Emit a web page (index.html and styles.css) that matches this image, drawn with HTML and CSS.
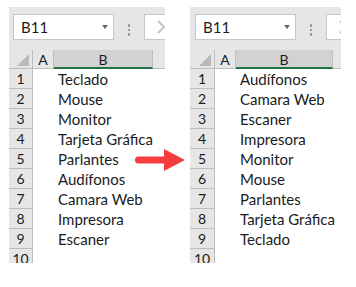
FILE: index.html
```html
<!DOCTYPE html>
<html>
<head>
<meta charset="utf-8">
<link rel="stylesheet" href="styles.css">
</head>
<body>
<div class="stage">
  <div class="sheet sheet-left">
    <div class="bar">
      <div class="namebox"><span class="ref">B11</span><span class="caret"></span></div>
      <div class="dots"><i></i><i></i><i></i></div>
      <div class="fx"><svg class="chev" width="8" height="14" viewBox="0 0 8 14"><polyline points="1,1 7,7 1,13" fill="none" stroke="#c4c4c4" stroke-width="2"/></svg></div>
    </div>
    <div class="grid">
      <div class="corner"></div><div class="ch">A</div><div class="ch sel">B</div><div class="ch rest"></div>
      <div class="rh">1</div><div class="c"></div><div class="c">Teclado</div><div class="c"></div>
      <div class="rh">2</div><div class="c"></div><div class="c">Mouse</div><div class="c"></div>
      <div class="rh">3</div><div class="c"></div><div class="c">Monitor</div><div class="c"></div>
      <div class="rh">4</div><div class="c"></div><div class="c">Tarjeta Gráfica</div><div class="c"></div>
      <div class="rh">5</div><div class="c"></div><div class="c">Parlantes</div><div class="c"></div>
      <div class="rh">6</div><div class="c"></div><div class="c">Audífonos</div><div class="c"></div>
      <div class="rh">7</div><div class="c"></div><div class="c">Camara Web</div><div class="c"></div>
      <div class="rh">8</div><div class="c"></div><div class="c">Impresora</div><div class="c"></div>
      <div class="rh">9</div><div class="c"></div><div class="c">Escaner</div><div class="c"></div>
      <div class="rh">10</div><div class="c"></div><div class="c"></div><div class="c"></div>
    </div>
  </div>

  <svg class="arrow" width="52" height="24" viewBox="0 0 52 24"><line x1="3.5" y1="11" x2="32" y2="11" stroke="#f53d3d" stroke-width="7" stroke-linecap="round"/><polygon points="29,0 50,11 29,22" fill="#f53d3d"/></svg>

  <div class="sheet sheet-right">
    <div class="bar">
      <div class="namebox"><span class="ref">B11</span><span class="caret"></span></div>
      <div class="dots"><i></i><i></i><i></i></div>
      <div class="fx"><svg class="chev" width="8" height="14" viewBox="0 0 8 14"><polyline points="1,1 7,7 1,13" fill="none" stroke="#c4c4c4" stroke-width="2"/></svg></div>
    </div>
    <div class="grid">
      <div class="corner"></div><div class="ch">A</div><div class="ch sel">B</div><div class="ch rest"></div>
      <div class="rh">1</div><div class="c"></div><div class="c">Audífonos</div><div class="c"></div>
      <div class="rh">2</div><div class="c"></div><div class="c">Camara Web</div><div class="c"></div>
      <div class="rh">3</div><div class="c"></div><div class="c">Escaner</div><div class="c"></div>
      <div class="rh">4</div><div class="c"></div><div class="c">Impresora</div><div class="c"></div>
      <div class="rh">5</div><div class="c"></div><div class="c">Monitor</div><div class="c"></div>
      <div class="rh">6</div><div class="c"></div><div class="c">Mouse</div><div class="c"></div>
      <div class="rh">7</div><div class="c"></div><div class="c">Parlantes</div><div class="c"></div>
      <div class="rh">8</div><div class="c"></div><div class="c">Tarjeta Gráfica</div><div class="c"></div>
      <div class="rh">9</div><div class="c"></div><div class="c">Teclado</div><div class="c"></div>
      <div class="rh">10</div><div class="c"></div><div class="c"></div><div class="c"></div>
    </div>
  </div>
</div>
</body>
</html>
```
FILE: styles.css
```css
html, body {
  margin: 0;
  padding: 0;
  background: #ffffff;
}
.stage {
  position: relative;
  display: flex;
  align-items: flex-start;
  padding: 7px 0 0 9px;
  gap: 25px;
  font-family: "Lato", "Liberation Sans", sans-serif;
  color: #1b1b1b;
}
.sheet {
  height: 256px;
  overflow: hidden;
  background: #e6e6e6;
  display: flex;
  flex-direction: column;
}
.sheet-left { width: 156px; --rh: 24px; --a: 21px; --b: 99px; --nbpad: 4px; }
.sheet-right { width: 151px; --rh: 25px; --a: 21px; --b: 97px; --nbpad: 5px; }

.bar {
  height: 43px;
  flex: none;
  box-sizing: border-box;
  padding: 7px 0 0 var(--nbpad);
  display: flex;
  align-items: flex-start;
}
.namebox {
  flex: none;
  width: 101px;
  height: 26px;
  box-sizing: border-box;
  background: #fff;
  border: 1px solid #c6c6c6;
  display: flex;
  align-items: center;
  justify-content: space-between;
  padding: 0 5px 0 7px;
  font-size: 15px;
}
.caret {
  width: 0;
  height: 0;
  border-left: 3.5px solid transparent;
  border-right: 3.5px solid transparent;
  border-top: 4px solid #6a6a6a;
}
.dots {
  flex: none;
  margin: 10px 0 0 14px;
  display: flex;
  flex-direction: column;
  gap: 2px;
}
.dots i {
  display: block;
  width: 2px;
  height: 2.5px;
  background: #9c9c9c;
}
.fx {
  flex: none;
  margin-left: 14px;
  width: 40px;
  height: 26px;
  box-sizing: border-box;
  background: #fff;
  border: 1px solid #c6c6c6;
  padding: 5px 0 0 12px;
}
.chev { display: block; }

.grid {
  flex: 1;
  display: grid;
  grid-template-columns: var(--rh) var(--a) var(--b) 1fr;
  grid-template-rows: 19px;
  grid-auto-rows: 20px;
  background: #fff;
}
.corner, .ch {
  background: #e6e6e6;
  box-sizing: border-box;
  border-right: 1px solid #bdbdbd;
  border-bottom: 1px solid #bdbdbd;
}
.corner { position: relative; }
.corner::after {
  content: "";
  position: absolute;
  right: 3px;
  bottom: 2px;
  width: 12px;
  height: 12px;
  background: #b9b9b9;
  clip-path: polygon(100% 0, 100% 100%, 0 100%);
}
.ch {
  display: flex;
  align-items: center;
  justify-content: center;
  font-size: 14px;
  padding-top: 1px;
}
.ch.sel {
  background: #d2d2d2;
  border-bottom: 2px solid #217346;
}
.ch.rest { border-right: none; }
.rh {
  background: #e6e6e6;
  box-sizing: border-box;
  border-right: 1px solid #bdbdbd;
  border-bottom: 1px solid #bdbdbd;
  display: flex;
  align-items: center;
  justify-content: center;
  font-size: 14px;
}
.c {
  display: flex;
  align-items: center;
  padding-left: 4px;
  font-size: 15px;
  white-space: nowrap;
}
.arrow {
  position: absolute;
  left: 135px;
  top: 149px;
}
```
